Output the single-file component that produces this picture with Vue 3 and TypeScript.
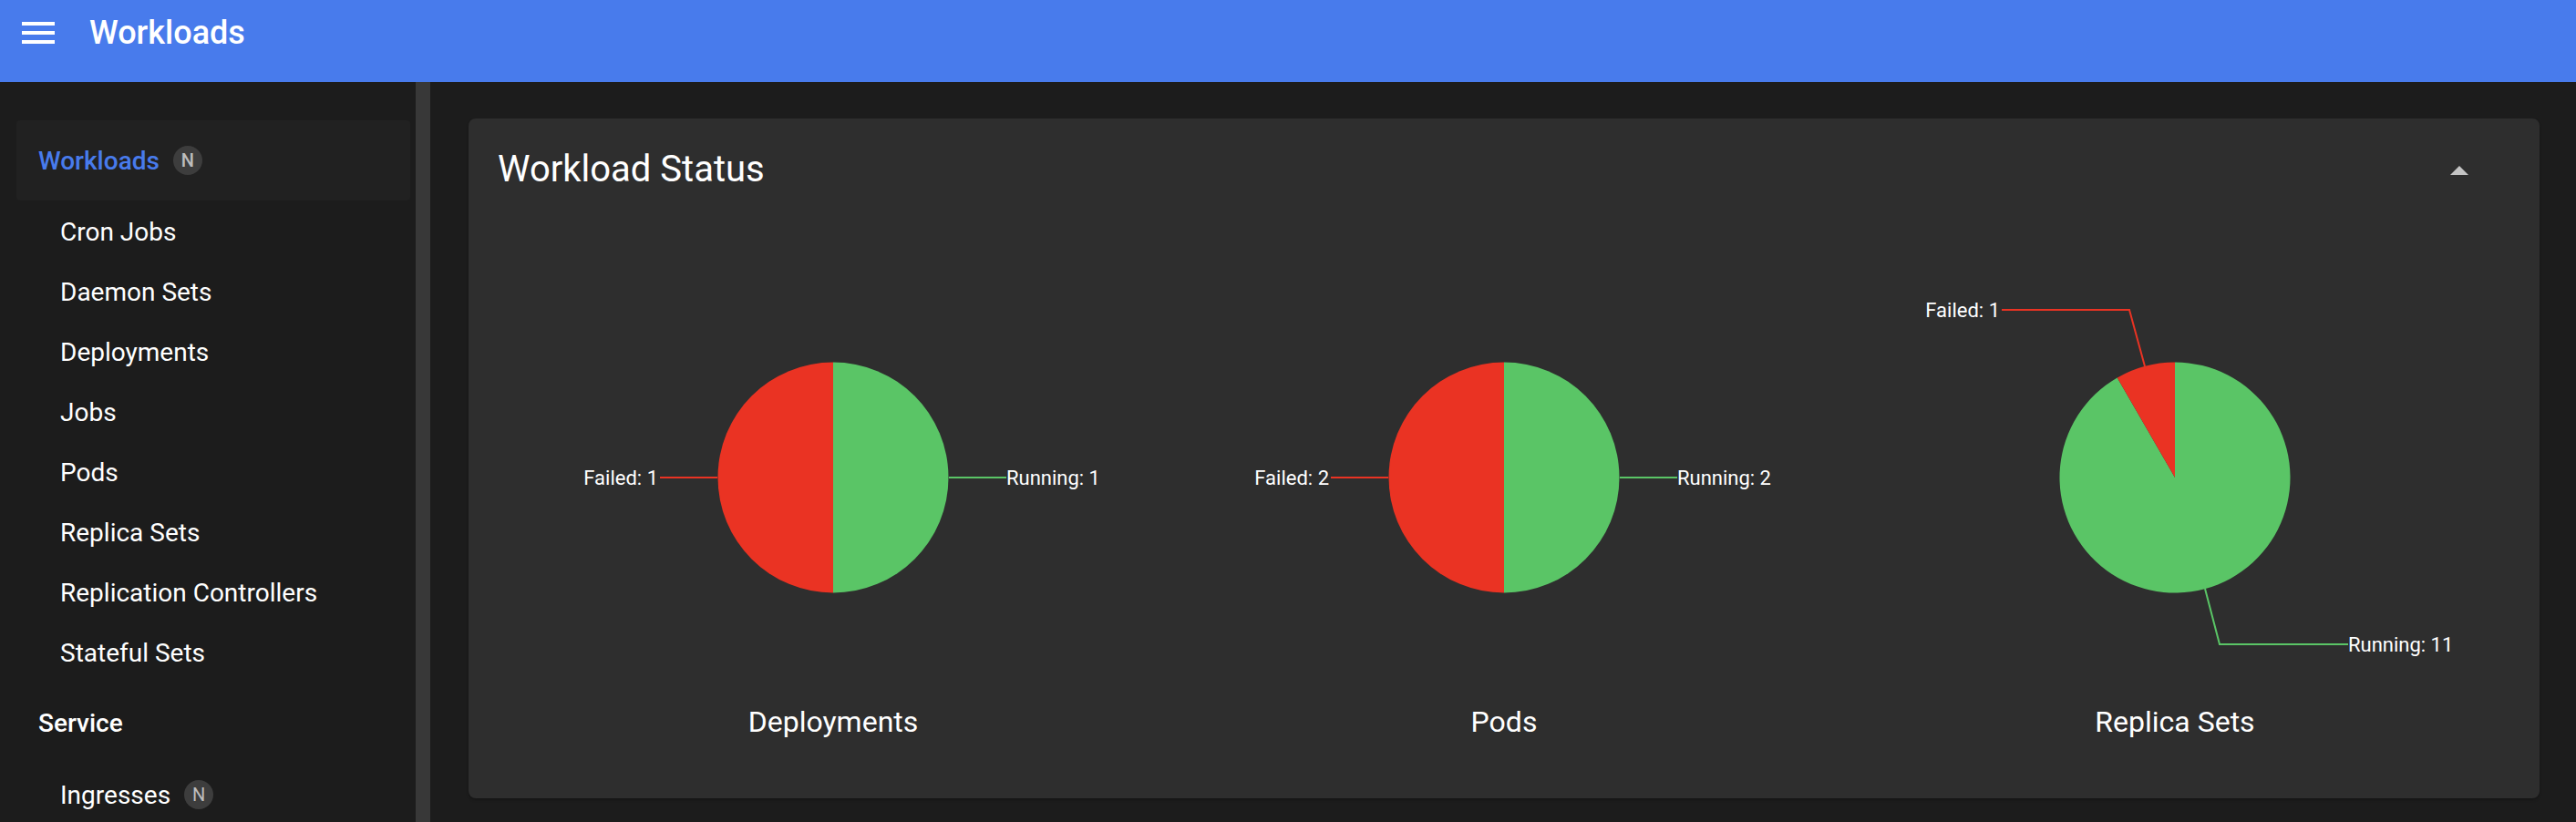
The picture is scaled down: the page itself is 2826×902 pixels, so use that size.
<template>
  <div class="page">
    <header class="toolbar">
      <button class="menu-btn" aria-label="menu">
        <svg width="36" height="24" viewBox="0 0 36 24"><path d="M0 0h36v4H0zM0 10h36v4H0zM0 20h36v4H0z" fill="#fff" /></svg>
      </button>
      <h1 class="page-title">Workloads</h1>
    </header>
    <div class="body">
      <nav class="sidebar">
        <div class="nav-list">
          <div class="nav-head active">
            <span>Workloads</span><span class="badge">N</span>
          </div>
          <a v-for="item in workloadItems" :key="item" class="nav-item">{{ item }}</a>
          <div class="nav-head section"><span>Service</span></div>
          <a class="nav-item">Ingresses<span class="badge thin">N</span></a>
        </div>
        <div class="scrollbar"></div>
      </nav>
      <main class="content">
        <section class="card">
          <div class="card-head">
            <h2 class="card-title">Workload Status</h2>
            <span class="caret"></span>
          </div>
          <div class="charts">
            <figure v-for="chart in charts" :key="chart.name" class="chart">
              <svg class="pie" width="736" height="460" viewBox="-368 -254 736 460">
                <path v-for="s in chart.slices" :key="s.color" :d="s.d" :fill="s.color" />
                <g v-for="l in chart.leaders" :key="l.text">
                  <polyline :points="l.points" fill="none" :stroke="l.color" stroke-width="2" />
                  <text :x="l.x" :y="l.y + 8" :text-anchor="l.anchor" class="pie-label">{{ l.text }}</text>
                </g>
              </svg>
              <figcaption class="chart-name">{{ chart.name }}</figcaption>
            </figure>
          </div>
        </section>
      </main>
    </div>
  </div>
</template>

<script setup lang="ts">
const RED = '#ea3323'
const GREEN = '#5ac566'
const R = 126.5

const workloadItems = [
  'Cron Jobs',
  'Daemon Sets',
  'Deployments',
  'Jobs',
  'Pods',
  'Replica Sets',
  'Replication Controllers',
  'Stateful Sets'
]

// clockwise from 12 o'clock, running first like the real chart
function slicePaths(running: number, failed: number) {
  const a = (running / (running + failed)) * Math.PI * 2
  const x = (R * Math.sin(a)).toFixed(2)
  const y = (-R * Math.cos(a)).toFixed(2)
  const big = a > Math.PI ? 1 : 0
  return [
    { color: GREEN, d: `M0 0L0 ${-R}A${R} ${R} 0 ${big} 1 ${x} ${y}Z` },
    { color: RED, d: `M0 0L${x} ${y}A${R} ${R} 0 ${1 - big} 1 0 ${-R}Z` }
  ]
}

function sideLeaders(running: number, failed: number) {
  return [
    { text: `Failed: ${failed}`, color: RED, points: '-127,0 -190,0', x: -192, y: 0, anchor: 'end' },
    { text: `Running: ${running}`, color: GREEN, points: '127,0 190,0', x: 190, y: 0, anchor: 'start' }
  ]
}

const charts = [
  { name: 'Deployments', slices: slicePaths(1, 1), leaders: sideLeaders(1, 1) },
  { name: 'Pods', slices: slicePaths(2, 2), leaders: sideLeaders(2, 2) },
  {
    name: 'Replica Sets',
    slices: slicePaths(11, 1),
    leaders: [
      { text: 'Failed: 1', color: RED, points: '-33,-122 -50,-184 -190,-184', x: -192, y: -184, anchor: 'end' },
      { text: 'Running: 11', color: GREEN, points: '33,122 49,183 190,183', x: 190, y: 183, anchor: 'start' }
    ]
  }
]
</script>

<style scoped>
.page {
  width: 2826px;
  height: 902px;
  display: flex;
  flex-direction: column;
  overflow: hidden;
  background: #1c1c1c;
  color: #fff;
  font-family: Roboto, "Liberation Sans", sans-serif;
}

.toolbar {
  height: 90px;
  flex: none;
  display: flex;
  align-items: flex-start;
  background: #487bec;
}

.menu-btn {
  margin: 24px 0 0 24px;
  padding: 0;
  width: 36px;
  height: 24px;
  border: 0;
  background: none;
  display: block;
}

.menu-btn svg {
  display: block;
}

.page-title {
  margin: 12px 0 0 38px;
  font-size: 36px;
  line-height: 48px;
  font-weight: 500;
}

.body {
  flex: 1;
  display: flex;
  min-height: 0;
}

.sidebar {
  width: 472px;
  flex: none;
  display: flex;
  overflow: hidden;
}

.nav-list {
  width: 456px;
  padding: 42px 6px 0 18px;
  box-sizing: border-box;
}

.nav-head {
  display: flex;
  align-items: center;
  height: 88px;
  padding-left: 24px;
  font-size: 28px;
  font-weight: 500;
}

.nav-head.active {
  background: #212121;
  border-radius: 4px;
  color: #487bec;
}

.nav-head.section {
  height: 89px;
  margin-top: 1px;
  color: #fff;
}

.nav-item {
  display: flex;
  align-items: center;
  height: 66px;
  padding: 2px 0 0 48px;
  box-sizing: border-box;
  font-size: 28px;
}

.badge {
  width: 32px;
  height: 32px;
  margin-left: 15px;
  border-radius: 50%;
  background: #3d3d3d;
  color: #bdbdbd;
  font-size: 20px;
  font-weight: 500;
  display: flex;
  align-items: center;
  justify-content: center;
}

.badge.thin {
  font-weight: 400;
}

.scrollbar {
  width: 16px;
  flex: none;
  background: #383838;
}

.content {
  flex: 1;
  padding: 40px 40px 0 42px;
  min-width: 0;
}

.card {
  height: 746px;
  box-sizing: border-box;
  background: #2e2e2e;
  border-radius: 8px;
  padding: 0 32px;
  box-shadow: 0 2px 3px rgba(0, 0, 0, 0.25);
}

.card-head {
  height: 140px;
  display: flex;
  align-items: flex-start;
  justify-content: space-between;
}

.card-title {
  margin: 33px 0 0;
  font-size: 40px;
  line-height: 46px;
  font-weight: 400;
}

.caret {
  margin: 52px 46px 0 0;
  width: 0;
  height: 0;
  border-left: 10px solid transparent;
  border-right: 10px solid transparent;
  border-bottom: 10px solid #c4c4c4;
}

.charts {
  display: grid;
  grid-template-columns: repeat(3, 736px);
}

.chart {
  margin: 0;
  display: flex;
  flex-direction: column;
  align-items: center;
}

.pie {
  display: block;
}

.pie-label {
  fill: #fff;
  font-size: 22px;
}

.chart-name {
  margin-top: 42px;
  font-size: 32px;
  line-height: 40px;
}
</style>

<style>
html,
body {
  margin: 0;
  overflow: hidden;
  background: #1c1c1c;
}
</style>
